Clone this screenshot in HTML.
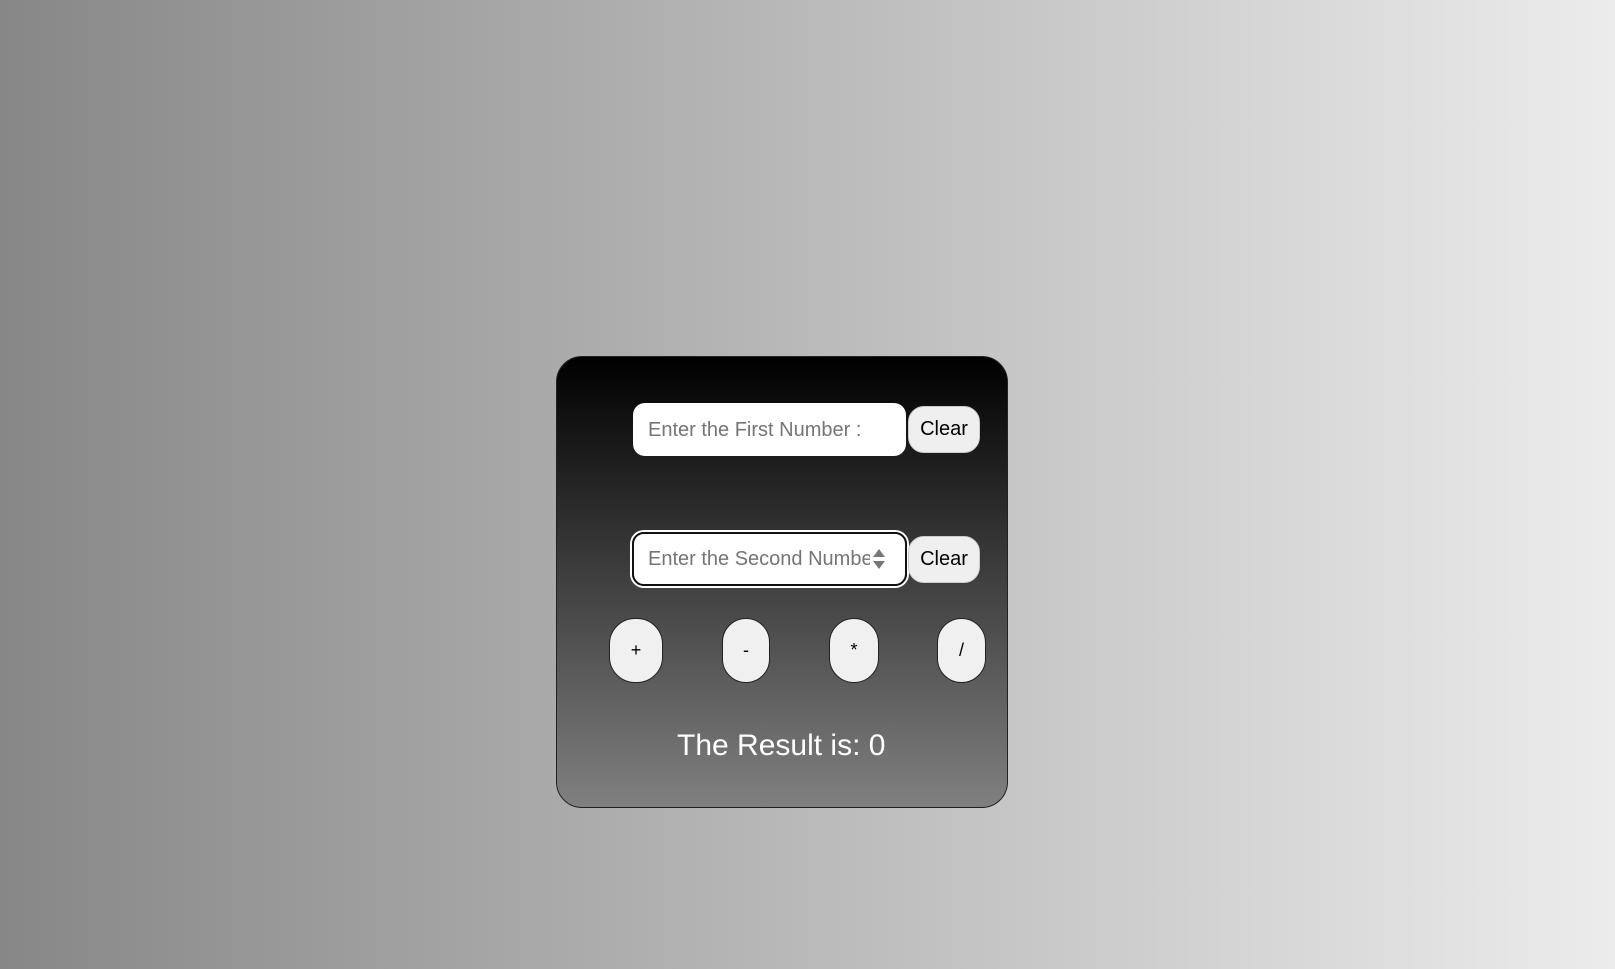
<!DOCTYPE html>
<html><head><style>
html,body{margin:0;padding:0;}
body{width:1615px;height:969px;background:linear-gradient(to right,#878787,#ececec);position:relative;overflow:hidden;font-family:"Liberation Sans",Arial,sans-serif;}
.card{position:absolute;left:556px;top:356px;width:450px;height:450px;border:1px solid #222;border-radius:26px;background:linear-gradient(to bottom,#000,#808080);}
.inp{position:absolute;background:#fff;border-radius:12px;color:#757575;font-size:20px;line-height:1;box-sizing:border-box;padding-left:15px;display:flex;align-items:center;overflow:hidden;white-space:nowrap;}
.clr{position:absolute;width:72px;height:47px;background:#efefef;border-radius:16px;font-size:20px;color:#000;display:flex;align-items:center;justify-content:center;box-sizing:border-box;border:1px solid #ccc;}
.op{position:absolute;top:618px;height:65px;background:#f0f0f0;border:1px solid #222;border-radius:26px;box-sizing:border-box;font-size:18px;color:#000;display:flex;align-items:center;justify-content:center;}
</style></head><body>
<div class="card"></div>
<div class="inp" style="left:633px;top:403px;width:273px;height:53px;">Enter the First Number :</div>
<div class="clr" style="left:908px;top:406px;">Clear</div>
<div style="position:absolute;left:630px;top:530px;width:279px;height:58px;border:2px solid #fff;border-radius:14px;box-sizing:border-box;"></div>
<div class="inp" style="left:632px;top:532px;width:275px;height:54px;border:2px solid #111;padding-left:14px;"><span style="display:inline-block;width:222px;overflow:hidden;">Enter the Second Number</span><svg width="14" height="24" viewBox="0 0 14 24" style="margin-left:2px"><path d="M7 2L13 10H1Z" fill="#777"/><path d="M7 22L13 14H1Z" fill="#777"/></svg></div>
<div class="clr" style="left:908px;top:536px;">Clear</div>
<div class="op" style="left:609px;width:54px;">+</div>
<div class="op" style="left:722px;width:48px;">-</div>
<div class="op" style="left:829px;width:50px;">*</div>
<div class="op" style="left:937px;width:49px;">/</div>
<div style="position:absolute;left:677px;top:731px;font-size:30px;color:#fff;line-height:1;">The Result is: 0</div>
</body></html>
